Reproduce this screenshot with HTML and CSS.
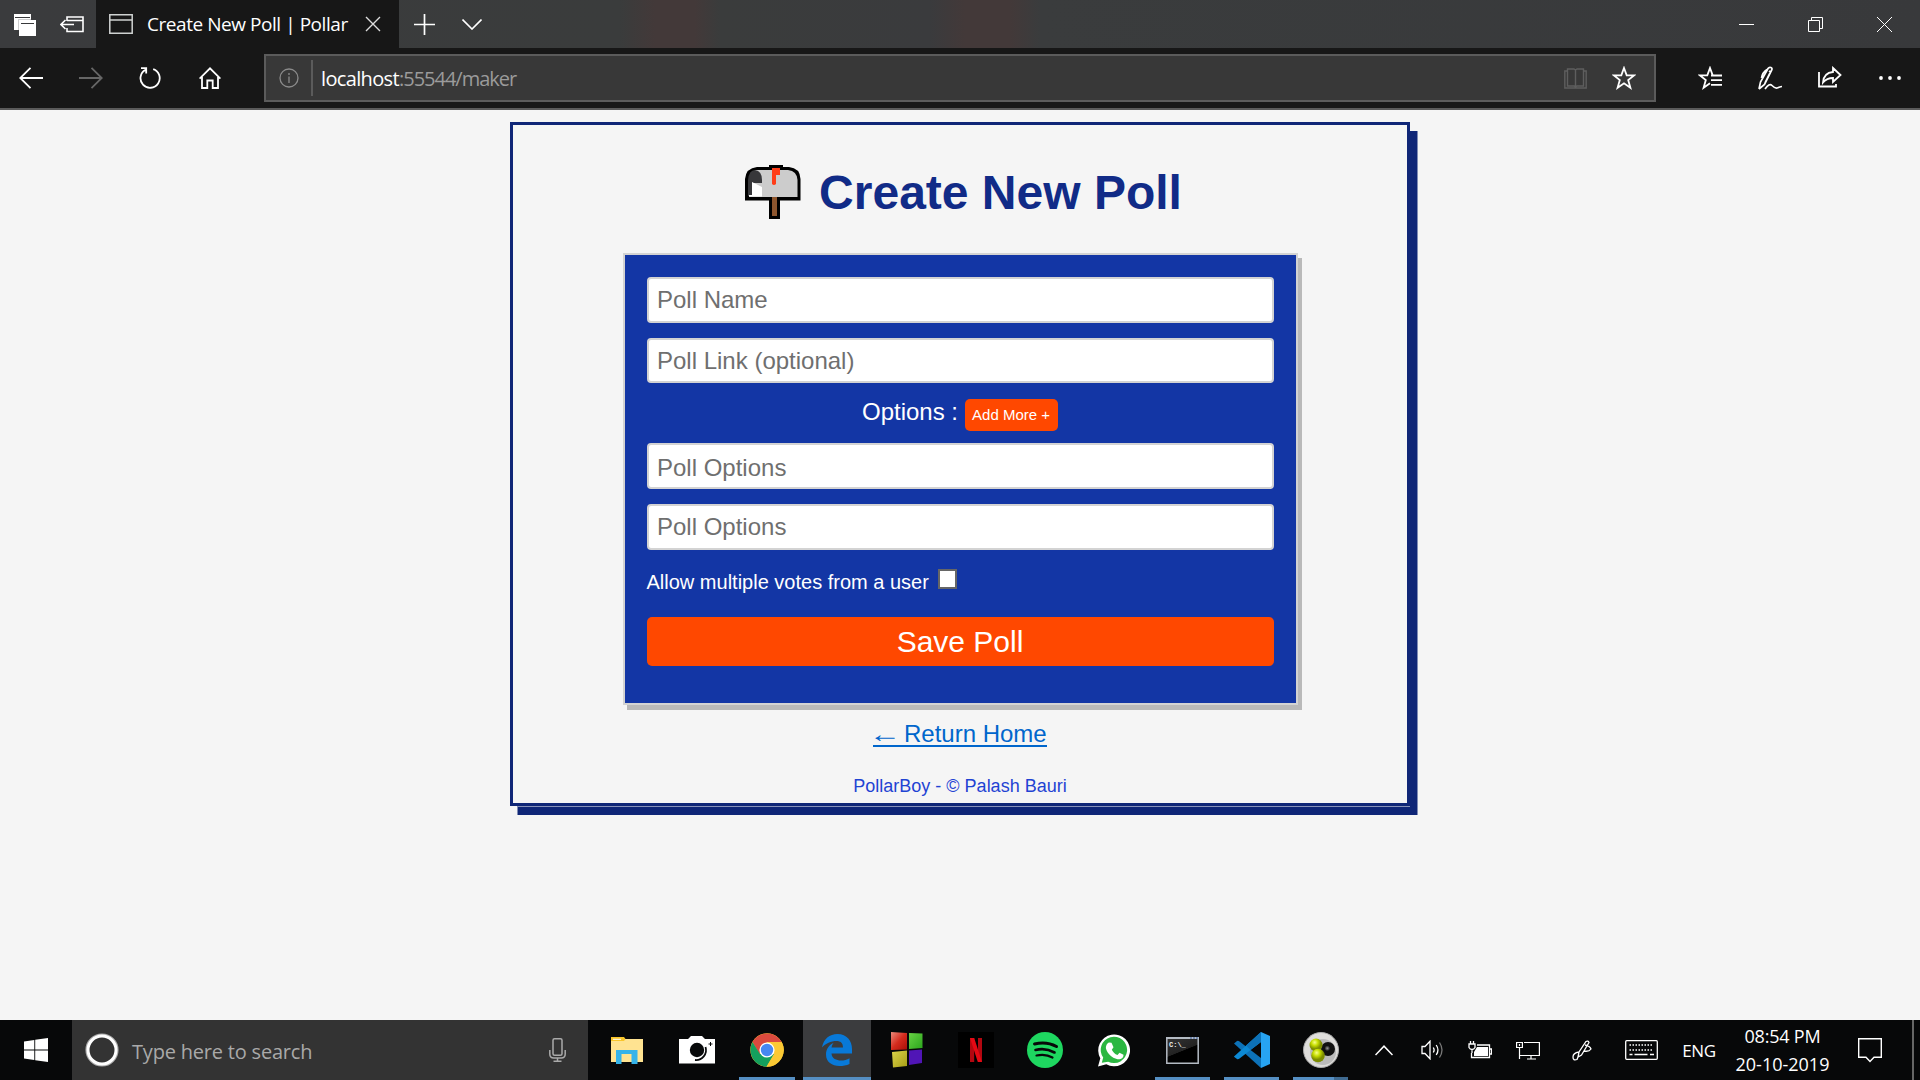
FILE: index.html
```html
<!DOCTYPE html>
<html lang="en">
<head>
<meta charset="utf-8">
<title>Create New Poll | PollarBoy</title>
<link rel="stylesheet" href="styles.css">
</head>
<body>
<div class="screen">
  <header class="tabbar">
    <div class="tool tabs-aside"><svg width="22" height="22" viewBox="0 0 22 22"><path fill="#fff" d="M0 0h17v6h5v16H5v-6H0z"/><path stroke="#38393b" d="M1 3.500h15M7 9.500h13" fill="none"/><path stroke="#38393b" d="M4.500 16V5.500H17" fill="none" opacity=".25"/></svg></div>
    <div class="tool"><svg width="24" height="17" viewBox="0 0 24 17" fill="none" stroke="#fff" stroke-width="1.600"><path d="M7 5V1h16v14.500H7V12M7 4.500h16M1 8.500h13M5.500 4L1 8.500 5.500 13"/></svg></div>
    <div class="tab">
      <svg width="24" height="20" viewBox="0 0 24 20" fill="none" stroke="#cfd2d1" stroke-width="1.500"><path d="M.8.8h22.400v18.400H.8zM.8 6h22.400"/></svg>
      <span class="tab-title">Create New Poll | PollarBoy</span>
      <svg class="tab-close" width="16" height="16" viewBox="0 0 16 16" stroke="#ddd" stroke-width="1.400"><path d="M1 1l14 14M15 1L1 15"/></svg>
    </div>
    <div class="tool"><svg width="21" height="21" viewBox="0 0 21 21" stroke="#fff" stroke-width="1.700"><path d="M0 10.500h21M10.500 0v21"/></svg></div>
    <div class="tool"><svg width="20" height="11" viewBox="0 0 20 11" fill="none" stroke="#fff" stroke-width="1.600"><path d="M.5.5L10 10 19.500.5"/></svg></div>
    <div class="window-buttons">
      <div class="winbtn"><svg width="15" height="15" viewBox="0 0 15 15" stroke="#fff"><path d="M0 7.500h15"/></svg></div>
      <div class="winbtn"><svg width="15" height="15" viewBox="0 0 15 15" fill="none" stroke="#fff"><path d="M.5 3.500h11v11H.5zM3.500 3V.5h11v11H12"/></svg></div>
      <div class="winbtn"><svg width="15" height="15" viewBox="0 0 15 15" stroke="#fff"><path d="M0 0l15 15M15 0L0 15"/></svg></div>
    </div>
  </header>

  <nav class="navbar">
    <div class="nav-left">
      <div class="navbtn"><svg width="24" height="22" viewBox="0 0 24 22" fill="none" stroke="#fff" stroke-width="1.800"><path d="M24 11H1M11.500.8L1.200 11l10.300 10.200"/></svg></div>
      <div class="navbtn"><svg width="24" height="22" viewBox="0 0 24 22" fill="none" stroke="#666" stroke-width="1.800"><path d="M0 11h23M12.500.8L22.800 11 12.500 21.200"/></svg></div>
      <div class="navbtn"><svg width="22" height="22" viewBox="0 0 22 22" fill="none" stroke="#fff" stroke-width="1.800"><path d="M14.200 2.100A9.600 9.600 0 1 1 6.600 2.700M2 1.200h5.200v5.200"/></svg></div>
      <div class="navbtn"><svg width="22" height="22" viewBox="0 0 22 22" fill="none" stroke="#fff" stroke-width="1.800"><path d="M.6 11.700L11 1.300l10.400 10.400M3 10v11h5.300v-7.500h5.400V21H19V10"/></svg></div>
    </div>
    <div class="address">
      <svg class="info" width="20" height="20" viewBox="0 0 20 20" fill="none" stroke="#8b8b8b" stroke-width="1.300"><circle cx="10" cy="10" r="9"/><path d="M10 8.500V15M10 5v2"/></svg>
      <span class="divider"></span>
      <span class="url"><b>localhost</b>:55544/maker</span>
      <svg class="book" width="23" height="21" viewBox="0 0 23 21" fill="none" stroke="#5e5e5e" stroke-width="1.400"><path d="M3.500 1H10l1.500 1L13 1h6.500v17H13l-1.500 1-1.500-1H3.500zM11.500 2v17M3.500 3H.8v17h21.400V3h-2.700"/></svg>
      <svg class="star" width="24" height="24" viewBox="0 0 24 24" fill="none" stroke="#fff" stroke-width="1.800"><path d="M12 2l2.700 7.300h7.600l-6.100 4.800 2.200 7.700L12 17.300l-6.400 4.500 2.200-7.700-6.100-4.800h7.600z"/></svg>
    </div>
    <div class="nav-right">
      <div class="navbtn"><svg width="24" height="24" viewBox="0 0 24 24" fill="none" stroke="#fff" stroke-width="1.800"><path d="M20 9.300h-5.300L12 2 9.300 9.300H1.700l6.100 4.800-2.200 7.700L12 17.300M13 9.500h11M13 14.200h11M13 18.900h11"/></svg></div>
      <div class="navbtn"><svg width="24" height="24" viewBox="0 0 24 24" fill="none" stroke="#fff" stroke-width="1.700"><path d="M1 23l1.500-7L10 2.500C11.500.3 15 1.500 13.700 4L6.500 18.500 1 23M9 3.500C5 6 4 9 3.500 12M11 5l1.500 1L7 17M7 23c3-4 5-5.500 7-3.500s3 3 5 2.500 3-1.500 5-1.500"/></svg></div>
      <div class="navbtn"><svg width="24" height="24" viewBox="0 0 24 24" fill="none" stroke="#fff" stroke-width="1.800"><path d="M1 6v14.500h17V18M15 2l7.500 7L15 16v-4c-4 0-7 1-10 4.500C5.500 10 9 6.500 15 6z"/></svg></div>
      <div class="navbtn"><svg width="22" height="4" viewBox="0 0 22 4" fill="#fff"><circle cx="2" cy="2" r="1.900"/><circle cx="11" cy="2" r="1.900"/><circle cx="20" cy="2" r="1.900"/></svg></div>
    </div>
  </nav>

  <main class="page">
    <section class="container">
      <h1 class="title">
        <svg width="56" height="54" viewBox="0 0 56 54"><path fill="#000" d="M12 2h12V0h14v2h6q11 1 11.500 12v21.500H35V54H24V35.500H0V14Q1 3 12 2z"/><path fill="#ccc" d="M10 5h33q9 1 9.500 10v17H4z"/><path fill="#37373a" d="M3 31V15Q4 5 10 5q7 1 7 10v3H7v13z"/><path fill="#fff" d="M7 17l10 5v9.500H4V30h3z"/><path fill="#ff3d18" d="M27 3h8v7h-4v9q-2 2-4 0z"/><path fill="#8e562e" d="M27 32h5v19h-5z"/></svg>
        <span>Create New Poll</span>
      </h1>
      <form class="poll-form">
        <input class="field" type="text" placeholder="Poll Name">
        <input class="field field-link" type="text" placeholder="Poll Link (optional)">
        <div class="options-row"><span>Options :</span><button class="add" type="button">Add More +</button></div>
        <input class="field" type="text" placeholder="Poll Options">
        <input class="field" type="text" placeholder="Poll Options">
        <label class="allow">Allow multiple votes from a user <input class="check" type="checkbox"></label>
        <button class="save" type="button">Save Poll</button>
      </form>
      <a class="home" href="#"><span class="arrow">←</span> Return Home</a>
      <footer class="credit">PollarBoy - © Palash Bauri</footer>
    </section>
  </main>

  <footer class="taskbar">
    <div class="start"><svg width="24" height="24" viewBox="0 0 24 24" fill="#fff"><path d="M0 3.400l10.300-1.500v9.600H0zM11.200 1.700L24 0v11.500H11.200zM0 12.400h10.300v9.700L0 20.600zM11.200 12.400H24V24l-12.800-1.800z"/></svg></div>
    <div class="search">
      <svg width="34" height="34" viewBox="0 0 34 34" fill="none"><circle cx="17" cy="17" r="15.600" stroke="#aaa" stroke-width="2"/><circle cx="17" cy="17" r="14" stroke="#fff" stroke-width="3"/></svg>
      <span class="search-text">Type here to search</span>
      <svg class="mic" width="17" height="24" viewBox="0 0 17 24" fill="none" stroke="#aaa" stroke-width="1.500"><rect x="4" y=".8" width="9" height="16.500" rx="1.500"/><path d="M.8 12v4q0 4 4 4h7.400q4 0 4-4v-4M8.500 20v3M4.500 23.200h8"/></svg>
    </div>
    <div class="apps">
      <div class="app wide"><svg width="32" height="27" viewBox="0 0 32 27"><path fill="#ffe391" d="M0 2h32v23H0z"/><path fill="#f9c62b" d="M0 0h13l1.500 2L13 4H0z"/><path fill="#fff" d="M2 1.800h8v1H2z"/><path fill="#35b3e9" d="M5 13h21.500v14h-6v-10h-10v10H5z"/></svg></div>
      <div class="app wide"><svg width="36" height="28" viewBox="0 0 36 28"><path fill="#fff" d="M0 3h9l3-3h11l3 3h10v24.500H0z"/><circle cx="18" cy="14" r="7.200" fill="#080a0b"/><path d="M26.500 11a10 10 0 0 1-10.500 13" fill="none" stroke="#080a0b" stroke-width="1.800"/><path stroke="#080a0b" d="M31.500 6v4M29.500 8h4"/></svg></div>
      <div class="app wide running"><svg width="34" height="34" viewBox="0 0 34 34"><circle cx="17" cy="17" r="16.700" fill="#fbc934"/><path fill="#db4a3e" d="M2.500 9A16.700 16.700 0 0 1 31.700 9H17l-7.500 12z"/><path fill="#14a05d" d="M2.500 9a16.700 16.700 0 0 0 14 24.700L24 21l-14 0z"/><path fill="#fbc934" d="M31.700 9H17l7.300 12-7.800 12.700A16.700 16.700 0 0 0 31.700 9z"/><circle cx="17" cy="17" r="7.600" fill="#fff"/><circle cx="17" cy="17" r="6.200" fill="#4688f1"/></svg></div>
      <div class="app active"><svg width="30" height="32" viewBox="0 0 30 32"><path fill="#0879d8" d="M0 13.500C1.500 5 7.500 0 15.500 0 25 0 30 7 30 15v4.500H9.500c.3 5 5 7 9.500 7 3 0 6-.8 8.500-2.300V30c-3 1.500-6.500 2-10 2C10 32 4 28 4 20.500 4 15 7 11 11.500 9c-1 1.200-1.700 2.700-2 4.500H21C21 9 18.500 7 14.500 7 9 7 3.500 9.500 0 13.500z"/></svg></div>
      <div class="app"><svg width="34" height="36" viewBox="0 0 34 36"><defs><linearGradient id="red" x1="0" y1="0" x2="1" y2="1"><stop offset="0" stop-color="#ed8b7c"/><stop offset=".5" stop-color="#d52b1d"/><stop offset="1" stop-color="#a81008"/></linearGradient><linearGradient id="green" x2="1" y2="1"><stop offset="0" stop-color="#67d244"/><stop offset="1" stop-color="#2ba51c"/></linearGradient><linearGradient id="olive" x2="1" y2="1"><stop offset="0" stop-color="#dcd449"/><stop offset="1" stop-color="#a69d17"/></linearGradient></defs><path fill="url(#red)" d="M1 0l16 1v16.500L1 18z"/><path fill="url(#green)" d="M19 1l13.500.5V16L19 17z"/><path fill="url(#olive)" d="M2 20l15-1.500V34L3 35.500z"/><path fill="#5015b6" d="M19 18.500l13-1v13.500L19 33z"/></svg></div>
      <div class="app"><svg width="36" height="36" viewBox="0 0 36 36"><path d="M0 0h36v36H0z"/><path fill="#b20710" d="M12 6h4.200v24H12zM20 6h4v24h-4z"/><path fill="#e50914" d="M12 6h4.200L24 30h-4.200z"/></svg></div>
      <div class="app"><svg width="36" height="36" viewBox="0 0 36 36"><circle cx="18" cy="18" r="18" fill="#1ed760"/><g fill="none" stroke="#070909" stroke-linecap="round"><path stroke-width="3" d="M7.500 12q12-3 22 2.500"/><path stroke-width="2.600" d="M8.500 18q10-2.500 19 2.500"/><path stroke-width="2.200" d="M9.500 23.500q9-2 16 2"/></g></svg></div>
      <div class="app"><svg width="32" height="33" viewBox="0 0 32 33"><path fill="#fff" d="M0 32.500l2.300-8.300a15.900 15.900 0 1 1 6 6z"/><path fill="#2bb741" d="M3.800 28.800l1.400-5.200a13.200 13.200 0 1 1 5 4.200z" /><path fill="#fff" d="M11 8.500l2.500.2 2 4.500-1.700 2.500c1.500 2.800 3 4.200 5.700 5.300l2-2.300 4 2c0 4-3.500 5-6 4.500-6-1.500-10-5.500-11.500-10.500-.5-3 1.500-5.800 3-6.200z"/></svg></div>
      <div class="app running"><svg width="33" height="27" viewBox="0 0 33 27"><defs><linearGradient id="con" x2=".5" y2="1"><stop offset="0" stop-color="#333"/><stop offset=".6" stop-color="#222"/><stop offset=".62" stop-color="#000"/></linearGradient></defs><path fill="url(#con)" stroke="#b4bbc4" stroke-width="1.500" d="M.8.8h31.400v25.400H.8z"/><path fill="#b4bbc4" d="M0 0h33v2H0z"/><path stroke="#355b9c" stroke-dasharray="2 1" d="M24 1h8"/><text class="prompt" x="3" y="10">C:\_</text></svg></div>
      <div class="app running"><svg width="36" height="36" viewBox="0 0 36 36"><path fill="#0d72b8" d="M0 11.500l3-2.500q1.200-.5 2.200.2L27 26v10z"/><path fill="#0c89d4" d="M0 24.500L27 0v10L5.200 26.800q-1 .7-2.200.2l-2.700-2q-.5-.2-.3-.5z"/><path fill="#27a4f2" d="M27 0l9 4v28l-9 4z"/><path fill="#0d72b8" d="M27 0v10L16.500 18l-4.500-4.500z"/></svg></div>
      <div class="app running grouped"><svg width="36" height="36" viewBox="0 0 36 36"><defs><radialGradient id="lime" cx=".4" cy=".3"><stop offset="0" stop-color="#f8ff8a"/><stop offset=".5" stop-color="#c6dd00"/><stop offset="1" stop-color="#7d8d00"/></radialGradient><radialGradient id="jet" cx=".45" cy=".45"><stop offset="0" stop-color="#999"/><stop offset=".4" stop-color="#111"/></radialGradient></defs><circle cx="18" cy="18" r="17.500" fill="#dedddb" stroke="#aaa"/><circle cx="20" cy="20" r="13" fill="#bbb"/><circle cx="25" cy="17" r="7" fill="url(#jet)"/><circle cx="13" cy="13" r="6.500" fill="url(#lime)"/><circle cx="15" cy="23.500" r="6.800" fill="url(#lime)"/></svg></div>
    </div>
    <div class="tray">
      <div class="cell"><svg width="18" height="11" viewBox="0 0 18 11" fill="none" stroke="#fff" stroke-width="1.500"><path d="M.5 10L9 1.200 17.500 10"/></svg></div>
      <div class="cell"><svg width="23" height="20" viewBox="0 0 23 20" fill="none" stroke="#fff" stroke-width="1.300"><path d="M1 6.500h3L9 1.200v17.600l-5-5.300H1z"/><path d="M12.300 7.500q1.700 2.500 0 5M15.200 5q3.500 5 0 10"/><path stroke="#777" d="M18.500 2.500q5 7.500 0 15"/></svg></div>
      <div class="cell"><svg width="24" height="18" viewBox="0 0 24 18" fill="none" stroke="#fff" stroke-width="1.300"><path d="M9 4h12.500v12.500h-18V12M22 8h1.500v5H22"/><path fill="#fff" stroke="none" d="M9 6h11v9H6v-4z"/><path d="M1 3h6v3.500q-1 2-3 2t-3-2zM2.500 0v3M5.500 0v3M4 8.500V12"/></svg></div>
      <div class="cell"><svg width="24" height="19" viewBox="0 0 24 19" fill="none" stroke="#fff" stroke-width="1.200"><path d="M8 1.500h15.400v13H4M3.500 6.500V18M.6 1.500h5.800v5H.6zM15 14.500V18M11 18h9M3.500 3v2"/></svg></div>
      <div class="cell ink"><svg width="20" height="21" viewBox="0 0 20 21" fill="none" stroke="#fff" stroke-width="1.300"><path d="M6 17l1-5 7-10.500q2-1.200 3 1L9.500 15zM13 5q5 1 6 4-2 3-7 2M7 12q-6 1-6 5t4 2.500l1-2.500"/></svg></div>
      <div class="cell keys"><svg width="33" height="20" viewBox="0 0 33 20" fill="none" stroke="#fff" stroke-width="1.300"><rect x=".7" y=".7" width="31.600" height="18.600" rx="1"/><path stroke-dasharray="1.500 1.500" d="M4.500 5h24M4.500 10h24"/><path d="M4.500 14.500h3M9.500 14.500h13M25 14.500h4"/></svg></div>
      <div class="cell lang">ENG</div>
      <div class="cell clock"><span class="time">08:54 PM</span><span class="date">20-10-2019</span></div>
      <div class="cell notes"><svg width="24" height="25" viewBox="0 0 24 25" fill="none" stroke="#fff" stroke-width="1.400"><path d="M.7.7h22.600v18.600H16L12 23.500l-4-4.200H.7z"/></svg></div>
      <span class="peek"></span>
    </div>
  </footer>
</div>
</body>
</html>
```
FILE: styles.css
```css
* { box-sizing: border-box; }
body { margin: 0; background: #f5f5f5; font-family: "Liberation Sans", Arial, sans-serif; }
svg { display: block; flex: none; }
.screen { width: 1920px; height: 1080px; display: flex; flex-direction: column; overflow: hidden; }

/* browser tabs */
.tabbar { height: 48px; flex: none; display: flex; font-family: "Open Sans", "Noto Sans", sans-serif;
  background: linear-gradient(90deg, #3a3b3d 0, #3a3c3c 620px, #433939 655px, #433939 695px, #3a3c3c 720px, #3a3b3d 930px, #433939 965px, #433939 1010px, #3a3c3d 1040px, #38393b 1920px); }
.tool { width: 48px; display: flex; align-items: center; justify-content: center; padding-top: 1px; }
.tabs-aside { padding: 2px 0 0 2px; }
.tab { width: 303px; margin-right: 1px; background: #171717; display: flex; align-items: center; padding: 0 18px 0 13px; color: #fff; }
.tab-title { width: 202px; margin-left: 14px; overflow: hidden; white-space: nowrap; font-size: 19px; letter-spacing: -0.45px; }
.tab-close { margin-left: auto; }
.window-buttons { margin-left: auto; display: flex; padding-right: 1px; }
.winbtn { width: 69px; display: flex; align-items: center; justify-content: center; }

/* navigation */
.navbar { height: 62px; flex: none; display: flex; background: #171717; border-bottom: 2px solid #5b5b5b; font-family: "Open Sans", "Noto Sans", sans-serif; }
.nav-left { width: 264px; padding-left: 1px; display: flex; }
.nav-left .navbtn { width: 59.700px; }
.navbtn { width: 60px; display: flex; align-items: center; justify-content: center; }
.address { width: 1392px; height: 48px; margin-top: 6px; border: 2px solid #5b5b5b; background: #383838; display: flex; align-items: center; padding: 0 18px 0 13px; }
.divider { width: 2px; height: 36px; margin: 0 8px 0 12px; background: #5b5b5b; }
.url { padding-top: 1px; color: #9b9b9b; font-size: 20px; letter-spacing: -1px; }
.url b { color: #fff; font-weight: 400; letter-spacing: -0.65px; }
.book { margin-left: auto; margin-right: 25px; }
.nav-right { margin-left: auto; display: flex; }

/* poll page */
.page { height: 910px; flex: none; padding-top: 12px; background: #f5f5f5; }
.container { width: 900px; height: 684px; margin: 0 auto; border: 3px solid #0f2677; display: flex; flex-direction: column; align-items: center;
  box-shadow: 4px 5px 0 -4px #8792b9, 7.5px 9px 0 #0f2677; }
.title { margin: 40px 0 0; height: 88px; display: flex; align-items: flex-start; gap: 18px; color: #112b87; font-size: 48px; line-height: 56px; padding-left: 7px; }
.poll-form { width: 675px; height: 452px; flex: none; display: flex; flex-direction: column; padding: 22px; border: 2px solid #d3d3d3; background: #1336a5; box-shadow: 4px 5px 0 #b9b9b9; }
.field { height: 46px; flex: none; margin: 0 0 15px; padding: 1px 8px 1px 8.500px; border: 2px solid #d3d3d3; border-radius: 4px; background: #fff; font: 24px "Liberation Sans", Arial, sans-serif; }
.field::placeholder { color: #6f6f6f; opacity: 1; }
.field-link { height: 45px; margin-bottom: 16px; }
.options-row { height: 32px; margin-bottom: 12px; display: flex; justify-content: center; gap: 7px; color: #fff; font-size: 24px; line-height: 26px; }
.options-row + .field { padding-top: 3px; padding-bottom: 0; }
.add { width: 93px; height: 32px; padding: 0 1px 2px 0; border: 0; border-radius: 5px; background: #ff4800; color: #fff; font: 15px "Liberation Sans", Arial, sans-serif; }
.allow { height: 52px; display: flex; color: #fff; font-size: 20px; line-height: 34px; }
.check { appearance: none; width: 19px; height: 20px; margin: 4px 0 0 9px; border: 2px solid #666; background: #fff; }
.save { height: 49px; flex: none; padding: 0; border: 0; border-radius: 5px; background: #ff4800; color: #fff; font: 30px "Liberation Sans", Arial, sans-serif; }
.home { margin-top: 15px; color: #0066cc; font-size: 24px; line-height: 28px; text-decoration: none; background: linear-gradient(#0066cc, #0066cc) 0 25px / 100% 2px no-repeat; }
.arrow { display: inline-block; transform: scaleX(1.35); font-family: "Liberation Serif", serif; line-height: 20px; }
.credit { margin-top: 27px; color: #1f43d3; font-size: 18px; line-height: 22px; }

/* taskbar */
.taskbar { height: 60px; flex: none; display: flex; background: #070809; color: #fff; font-family: "Open Sans", "Noto Sans", sans-serif; }
.start { width: 72px; display: flex; align-items: center; justify-content: center; }
.search { width: 516px; background: #333; display: flex; align-items: center; padding: 0 22px 0 13px; }
.search-text { margin-left: 13px; padding-top: 2px; color: #a9a9a9; font-size: 20px; letter-spacing: -0.2px; }
.mic { margin-left: auto; }
.apps { display: flex; padding-left: 4px; }
.app { position: relative; width: 69px; display: flex; align-items: center; justify-content: center; }
.wide { width: 70px; }
.running::after, .active::after { content: ""; position: absolute; left: 7px; right: 7px; bottom: 0; height: 3px; background: #558fc3; }
.active { width: 68px; margin: 0 1px; background: #3b3c3e; }
.active::after { left: 0; right: 0; }
.grouped::after { background: linear-gradient(90deg, #558fc3 41px, #3f6a90 41px); }
.prompt { fill: #eee; font: bold 7px "Liberation Mono", monospace; }
.tray { margin-left: auto; width: 560px; display: flex; font-size: 17px; }
.cell { width: 48px; display: flex; align-items: center; justify-content: center; }
.ink { width: 60px; }
.keys { width: 59px; }
.lang { width: 56px; letter-spacing: -0.3px; }
.clock { width: 110px; flex-direction: column; font-size: 18px; line-height: 28px; letter-spacing: -0.2px; white-space: nowrap; padding-left: 1px; }
.date { letter-spacing: 0; }
.notes { width: 66px; }
.peek { width: 2px; margin-left: 9px; background: #666; }
```
